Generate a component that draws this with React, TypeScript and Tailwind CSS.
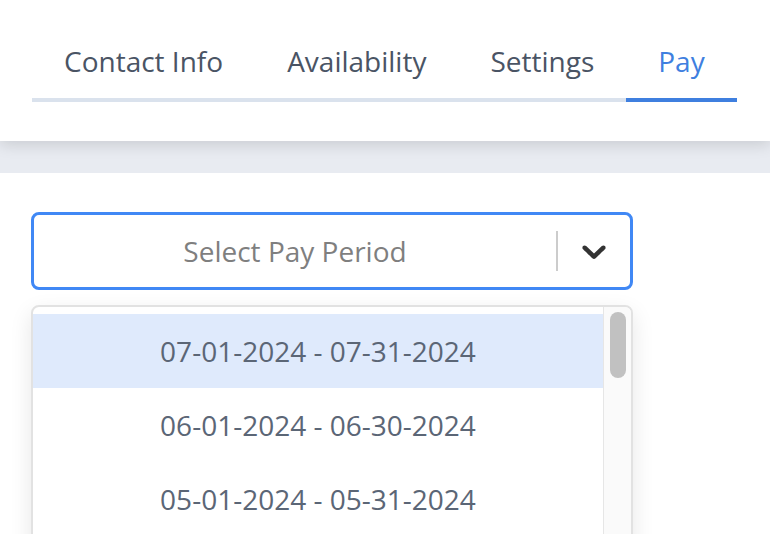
import React from "react";

const tabs = ["Contact Info", "Availability", "Settings", "Pay"];
const options = [
  "07-01-2024 - 07-31-2024",
  "06-01-2024 - 06-30-2024",
  "05-01-2024 - 05-31-2024",
];

export default function App() {
  return (
    <div
      className="w-full h-[534px] overflow-hidden bg-[#e8ebf1] flex flex-col"
      style={{ fontFamily: '"Open Sans", "Noto Sans", sans-serif' }}
    >
      <div className="relative z-10 h-[141px] shrink-0 bg-white shadow-[0_4px_14px_rgba(0,0,0,0.13)] pt-[41px] pl-[32px]">
        <div className="flex">
          {tabs.map((t) => {
            const active = t === "Pay";
            return (
              <div
                key={t}
                className={
                  active
                    ? "px-[32px] pb-[17px] border-b-4 border-[#3f7fdf] text-[#3f7fdf] text-[28px] leading-[40px] font-medium"
                    : "px-[32px] pb-[17px] border-b-4 border-[#dae2ed] text-[#4a5464] text-[28px] leading-[40px] font-medium"
                }
              >
                {t}
              </div>
            );
          })}
        </div>
      </div>
      <div className="h-[32px] shrink-0" />
      <div className="flex-1 bg-white pt-[39px] pl-[31px]">
        <div className="w-[602px]">
          <div className="h-[78px] border-[3px] border-[#4088f5] rounded-[8px] flex items-center bg-white">
            <div className="flex-1 text-center text-[28px] leading-[40px] text-[#7f7f7f]">
              Select Pay Period
            </div>
            <div className="w-[2px] h-[40px] bg-[#cccccc]" />
            <div className="px-[16px] flex items-center">
              <svg width="40" height="40" viewBox="0 0 20 20" fill="#333333">
                <path d="M4.516 7.548c0.436-0.446 1.043-0.481 1.576 0l3.908 3.747 3.908-3.747c0.533-0.481 1.141-0.446 1.574 0 0.436 0.445 0.408 1.197 0 1.615-0.406 0.418-4.695 4.502-4.695 4.502-0.217 0.223-0.502 0.335-0.787 0.335s-0.57-0.112-0.789-0.335c0 0-4.287-4.084-4.695-4.502s-0.436-1.17 0-1.615z" />
              </svg>
            </div>
          </div>
          <div className="mt-[15px] h-[400px] border-2 border-[#e2e2e2] rounded-[8px] shadow-[0_8px_22px_rgba(0,0,0,0.1)] bg-white flex overflow-hidden">
            <div className="flex-1 pt-[7px]">
              {options.map((o, i) => (
                <div
                  key={o}
                  className={
                    i === 0
                      ? "h-[74px] flex items-center justify-center bg-[#dfeafc] text-[28px] text-[#5b6676]"
                      : "h-[74px] flex items-center justify-center text-[28px] text-[#5b6676]"
                  }
                >
                  {o}
                </div>
              ))}
            </div>
            <div className="w-[28px] border-l border-[#e6e6e6] bg-[#fafafa] pt-[5px] pl-[6px]">
              <div className="w-[16px] h-[66px] rounded-full bg-[#c1c1c1]" />
            </div>
          </div>
        </div>
      </div>
    </div>
  );
}
